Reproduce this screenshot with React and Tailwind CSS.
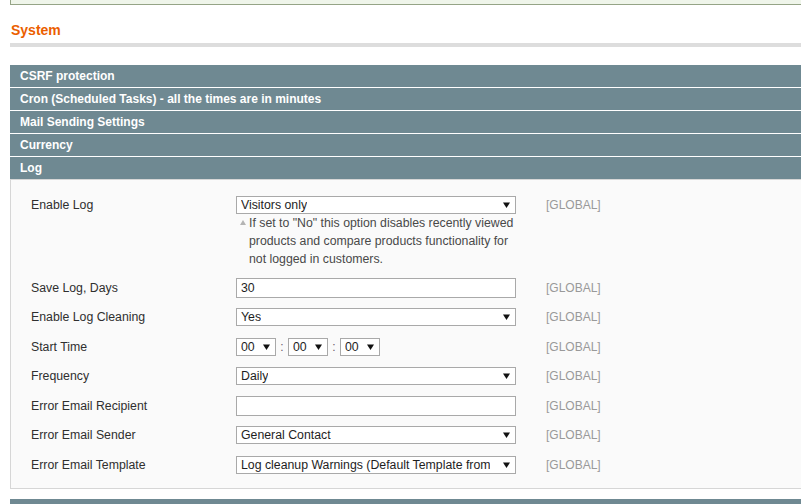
import React from 'react'

const font = { fontFamily: '"Liberation Sans", Arial, sans-serif' }

function Arrow() {
  return (
    <svg width="7" height="6" viewBox="0 0 7 6" className="shrink-0">
      <path d="M0 0.5 L7 0.5 L3.5 6 Z" fill="#111" />
    </svg>
  )
}

function Select({ value, width = 'w-[280px]' }) {
  return (
    <div className={`${width} h-[18px] border border-[#a9a9a9] bg-white flex items-center justify-between pl-[4px] pr-[5px] text-[12.3px] text-[#1e1e1e]`}>
      <span className="whitespace-nowrap overflow-hidden leading-[16px]">{value}</span>
      <Arrow />
    </div>
  )
}

function Input({ value }) {
  return (
    <div className="w-[280px] h-[20px] border border-[#a9a9a9] bg-white flex items-center pl-[4px] text-[12.3px] text-[#1e1e1e]">
      {value}
    </div>
  )
}

function Row({ label, children }) {
  return (
    <div className="flex items-center h-[29.5px]">
      <div className="w-[205px] text-[12.3px] text-[#2f2f2f]">{label}</div>
      <div className="w-[280px]">{children}</div>
      <div className="ml-[30px] text-[12px] text-[#999]">[GLOBAL]</div>
    </div>
  )
}

function Head({ title }) {
  return (
    <div className="h-[22px] mb-[1px] bg-[#6f8992] pl-[10px] text-[12px] font-bold leading-[22px] text-white">
      {title}
    </div>
  )
}

export default function App() {
  return (
    <div className="w-[801px] h-[504px] overflow-hidden bg-white" style={font}>
      <div className="ml-[10px] w-[900px]">
        {/* message box cut off at top */}
        <div className="h-[5px] border-l border-b border-[#95a486] bg-[#eff5ea]" />

        <div className="pt-[16px] pb-[4px] border-b-4 border-[#dddddd]">
          <h3 className="pl-[1px] text-[14px] font-bold leading-[18px] text-[#eb5e00]">System</h3>
        </div>

        <div className="mt-[18px]">
          <Head title="CSRF protection" />
          <Head title="Cron (Scheduled Tasks) - all the times are in minutes" />
          <Head title="Mail Sending Settings" />
          <Head title="Currency" />
          <div className="h-[22px] bg-[#6f8992] pl-[10px] text-[12px] font-bold leading-[22px] text-white">Log</div>

          <div className="border border-[#d6d6d6] bg-[#fafafa] pl-[20px] pt-[16px] pb-[8.5px]">
            <div className="flex items-start mb-[5px]">
              <div className="w-[205px] h-[18px] flex items-center text-[12.3px] text-[#2f2f2f]">Enable Log</div>
              <div className="w-[280px]">
                <Select value="Visitors only" />
                <div className="flex items-start pl-[4px] text-[12.3px] leading-[18px] text-[#494949]">
                  <svg width="6" height="5" viewBox="0 0 6 5" className="mt-[6px] mr-[3px] shrink-0">
                    <path d="M3 0 L6 5 L0 5 Z" fill="#b4b4b4" />
                  </svg>
                  <p className="w-[270px]">
                    If set to "No" this option disables recently viewed products and compare products functionality for not logged in customers.
                  </p>
                </div>
              </div>
              <div className="ml-[30px] h-[18px] flex items-center text-[12px] text-[#999]">[GLOBAL]</div>
            </div>

            <Row label="Save Log, Days">
              <Input value="30" />
            </Row>
            <Row label="Enable Log Cleaning">
              <Select value="Yes" />
            </Row>
            <Row label="Start Time">
              <div className="flex items-center">
                <Select value="00" width="w-[40px]" />
                <span className="w-[12px] text-center text-[12px] text-[#6a5a6a]">:</span>
                <Select value="00" width="w-[40px]" />
                <span className="w-[12px] text-center text-[12px] text-[#6a5a6a]">:</span>
                <Select value="00" width="w-[40px]" />
              </div>
            </Row>
            <Row label="Frequency">
              <Select value="Daily" />
            </Row>
            <Row label="Error Email Recipient">
              <Input value="" />
            </Row>
            <Row label="Error Email Sender">
              <Select value="General Contact" />
            </Row>
            <Row label="Error Email Template">
              <Select value="Log cleanup Warnings (Default Template from" />
            </Row>
          </div>

          <div className="mt-[10px] h-[22px] bg-[#6f8992]" />
        </div>
      </div>
    </div>
  )
}
